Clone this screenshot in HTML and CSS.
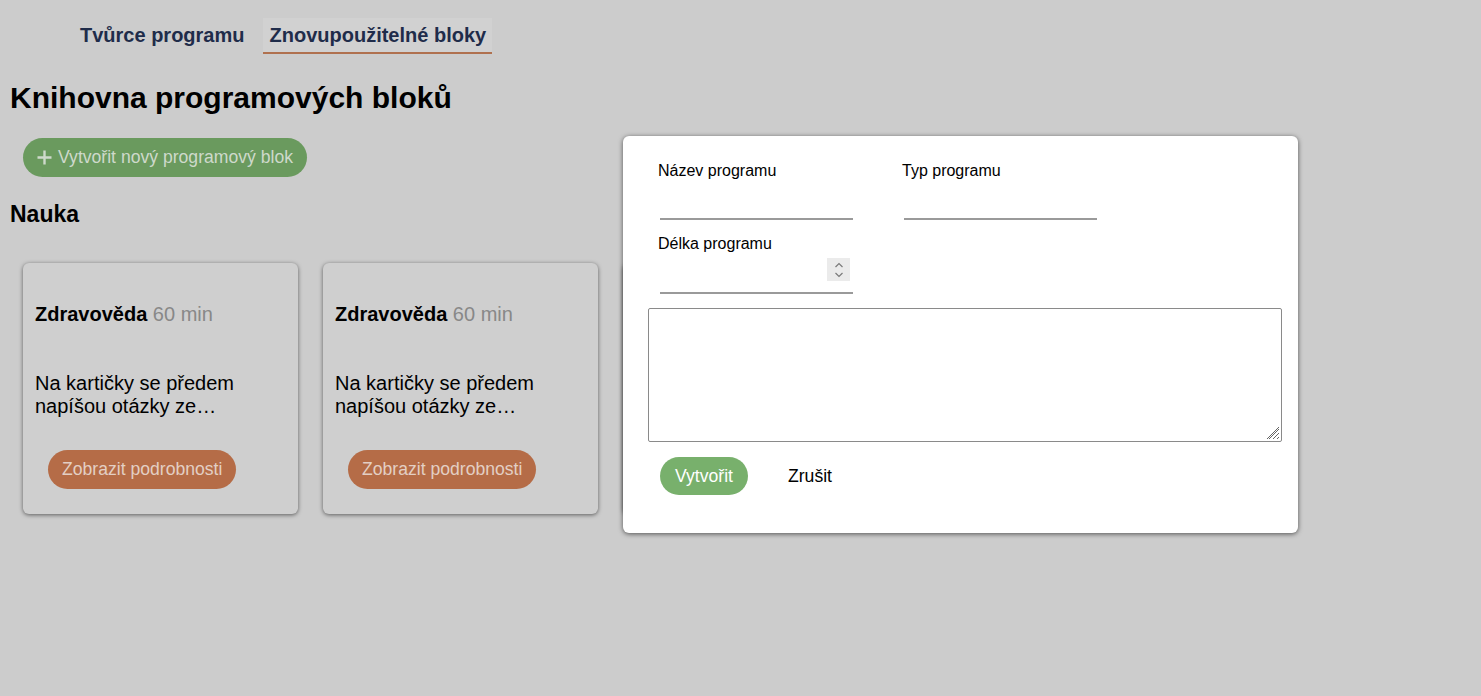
FILE: index.html
```html
<!DOCTYPE html>
<html lang="cs">
<head>
<meta charset="utf-8">
<title>Knihovna programových bloků</title>
<link rel="stylesheet" href="styles.css">
</head>
<body>
<nav class="tabs">
  <a class="tab">Tvůrce programu</a>
  <a class="tab active">Znovupoužitelné bloky</a>
</nav>
<main class="page">
  <h1 class="title">Knihovna programových bloků</h1>
  <button class="btn-new"><svg class="plus" width="15" height="15" viewBox="0 0 15 15"><path d="M7.5 0.5 V14.5 M0.5 7.5 H14.5" stroke="#ced9cb" stroke-width="2.4"/></svg>Vytvořit nový programový blok</button>
  <h2 class="section">Nauka</h2>
  <div class="cards">
    <div class="card">
      <div class="card-title"><b>Zdravověda</b> <span class="dur">60 min</span></div>
      <div class="card-desc">Na kartičky se předem napíšou otázky ze…</div>
      <button class="btn-detail">Zobrazit podrobnosti</button>
    </div>
    <div class="card">
      <div class="card-title"><b>Zdravověda</b> <span class="dur">60 min</span></div>
      <div class="card-desc">Na kartičky se předem napíšou otázky ze…</div>
      <button class="btn-detail">Zobrazit podrobnosti</button>
    </div>
    <div class="card" aria-hidden="true"></div>
  </div>
</main>
<div class="modal">
  <div class="row">
    <div class="field">
      <label class="lbl">Název programu</label>
      <div class="inp"></div>
    </div>
    <div class="field">
      <label class="lbl">Typ programu</label>
      <div class="inp"></div>
    </div>
  </div>
  <div class="row">
    <div class="field">
      <label class="lbl">Délka programu</label>
      <div class="inp num">
        <span class="spin">
          <svg width="10" height="18" viewBox="0 0 10 18"><path d="M1.5 6 L5 2.5 L8.5 6" fill="none" stroke="#7a7a7a" stroke-width="1.2"/><path d="M1.5 12 L5 15.5 L8.5 12" fill="none" stroke="#7a7a7a" stroke-width="1.2"/></svg>
        </span>
      </div>
    </div>
  </div>
  <div class="ta">
    <svg class="grip" width="14" height="14" viewBox="0 0 14 14"><path d="M13 3 L3 13 M13 7 L7 13 M13 11 L11 13 M13 1 L1 13" stroke="#666" stroke-width="1"/></svg>
  </div>
  <div class="actions">
    <button class="btn-create">Vytvořit</button>
    <span class="btn-cancel">Zrušit</span>
  </div>
</div>
</body>
</html>
```
FILE: styles.css
```css
html, body {
  margin: 0;
  padding: 0;
}
body {
  background: #cccccc;
  font-family: "Liberation Sans", Arial, sans-serif;
  color: #000;
  width: 1481px;
  height: 696px;
  overflow: hidden;
  position: relative;
}
.tabs {
  display: flex;
  gap: 13px;
  padding: 18px 0 0 74px;
}
.tab {
  font-size: 20px;
  font-weight: bold;
  color: #1f2c4a;
  padding: 0 6px;
  height: 34px;
  line-height: 34px;
  border-bottom: 2px solid transparent;
}
.tab.active {
  background: #d1d1d1;
  border-bottom-color: #b0714f;
}
.page {
  padding: 0 10px;
}
.title {
  font-size: 30px;
  font-weight: bold;
  margin: 26px 0 0;
  line-height: 36px;
}
.btn-new {
  margin: 22px 0 0 13px;
  height: 39px;
  border: none;
  border-radius: 20px;
  background: #6a9a5e;
  color: #ced9cb;
  font-family: inherit;
  font-size: 17.6px;
  padding: 0 14px;
  display: flex;
  align-items: center;
  gap: 6px;
}
.plus {
  display: block;
}
.section {
  font-size: 23px;
  font-weight: bold;
  margin: 23px 0 0;
  line-height: 28px;
}
.cards {
  display: flex;
  gap: 25px;
  margin: 35px 0 0 13px;
}
.card {
  width: 275px;
  height: 251px;
  box-sizing: border-box;
  border-radius: 6px;
  background: #cfcfcf;
  box-shadow: 0 1px 4px rgba(0, 0, 0, 0.55);
  padding: 39px 12px 0;
  display: flex;
  flex-direction: column;
}
.card-title {
  font-size: 20px;
  line-height: 24px;
}
.dur {
  color: #888;
}
.card-desc {
  font-size: 20px;
  line-height: 23px;
  margin-top: 46px;
}
.btn-detail {
  align-self: flex-start;
  margin: 32px 0 0 13px;
  height: 39px;
  padding: 0 14px;
  border: none;
  border-radius: 20px;
  background: #b56c47;
  color: #e3cfc4;
  font-family: inherit;
  font-size: 17.6px;
}
.modal {
  position: absolute;
  left: 623px;
  top: 136px;
  width: 675px;
  height: 397px;
  box-sizing: border-box;
  background: #fff;
  border-radius: 6px;
  box-shadow: 0 1px 5px rgba(0, 0, 0, 0.6);
  padding: 26px 0 0 25px;
}
.row {
  display: flex;
  gap: 49px;
  padding-left: 10px;
}
.field {
  width: 195px;
  display: flex;
  flex-direction: column;
}
.lbl {
  font-size: 16px;
  line-height: 18px;
}
.inp {
  margin-left: 2px;
  width: 193px;
  height: 38px;
  border-bottom: 2px solid #9a9a9a;
}
.row + .row {
  margin-top: 15px;
}
.num {
  height: 39px;
  display: flex;
  align-items: flex-start;
  justify-content: flex-end;
}
.spin {
  margin-top: 5px;
  margin-right: 3px;
  width: 23px;
  height: 23px;
  background: #ebebeb;
  display: flex;
  align-items: center;
  justify-content: center;
}
.ta {
  margin-top: 14px;
  width: 634px;
  height: 134px;
  box-sizing: border-box;
  border: 1px solid #8a8a8a;
  border-radius: 2px;
  display: flex;
  align-items: flex-end;
  justify-content: flex-end;
}
.grip {
  margin: 0 1px 1px 0;
}
.actions {
  display: flex;
  align-items: center;
  gap: 40px;
  margin: 15px 0 0 12px;
}
.btn-create {
  height: 38px;
  width: 88px;
  border: none;
  border-radius: 19px;
  background: #78b06c;
  color: #fff;
  font-family: inherit;
  font-size: 17.6px;
  padding: 0;
}
.btn-cancel {
  font-size: 17.6px;
  color: #000;
}
```
